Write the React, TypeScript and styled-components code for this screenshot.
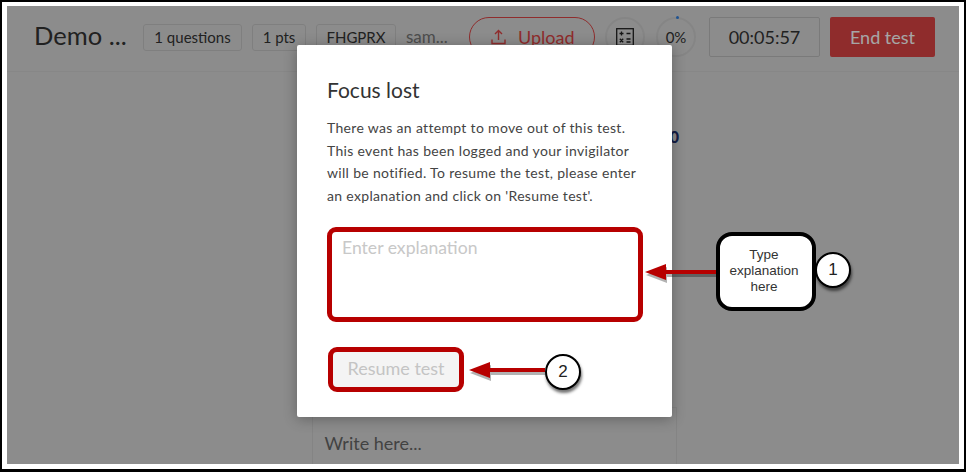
import React from "react";
import styled, { createGlobalStyle } from "styled-components";

const GlobalStyle = createGlobalStyle`
  html, body {
    margin: 0;
    padding: 0;
    background: #fff;
  }
  body {
    font-family: "Lato", "Noto Sans", sans-serif;
  }
`;

const Frame = styled.div`
  box-sizing: border-box;
  width: 966px;
  height: 472px;
  border: solid #000;
  border-width: 2px 2px 3px 2px;
  padding: 4px 5px 5px 5px;
  background: #fff;
`;

const Screen = styled.div`
  position: relative;
  height: 100%;
  overflow: hidden;
  display: flex;
  flex-direction: column;
  background: #d8d8d8;
`;

const Header = styled.header`
  flex: none;
  box-sizing: border-box;
  height: 66px;
  padding: 11px 24px 0 27px;
  display: flex;
  align-items: flex-start;
  border-bottom: 1px solid #cfcfcf;
`;

const Title = styled.h1`
  margin: -1px 18px 0 0;
  width: 91px;
  font-size: 25.5px;
  line-height: 38px;
  font-weight: 400;
  color: #333;
  white-space: nowrap;
`;

const Badge = styled.span`
  box-sizing: border-box;
  height: 27px;
  margin: 7px 10px 0 0;
  padding-bottom: 1px;
  width: ${(p: { $w: number }) => p.$w}px;
  display: flex;
  align-items: center;
  justify-content: center;
  border: 1px solid #c4c4c4;
  border-radius: 3px;
  font-size: 15px;
  color: #333;
`;

const Owner = styled.span`
  width: 63px;
  margin-top: 9px;
  font-size: 17px;
  line-height: 22px;
  color: #777;
`;

const UploadButton = styled.div`
  box-sizing: border-box;
  width: 126px;
  height: 40px;
  margin-right: 10px;
  display: flex;
  align-items: center;
  padding-left: 21px;
  gap: 12px;
  border: 1px solid #dc4444;
  border-radius: 20px;
  font-size: 18px;
  color: #dc4444;
`;

const Round = styled.div`
  position: relative;
  box-sizing: border-box;
  width: 40px;
  height: 40px;
  margin-right: ${(p: { $gap: number }) => p.$gap}px;
  border: 2px solid #cdcdcd;
  border-radius: 50%;
  display: flex;
  align-items: center;
  justify-content: center;
  font-size: 15px;
  color: #333;
`;

const Dot = styled.i`
  position: absolute;
  top: -3px;
  left: 18px;
  width: 3px;
  height: 3px;
  border-radius: 50%;
  background: #2f7fe0;
`;

const Timer = styled.div`
  box-sizing: border-box;
  width: 111px;
  height: 40px;
  margin-right: 10px;
  display: flex;
  align-items: center;
  justify-content: center;
  border: 1px solid #bcbcbc;
  border-radius: 2px;
  font-size: 18px;
  color: #333;
`;

const EndButton = styled.div`
  box-sizing: border-box;
  width: 105px;
  height: 40px;
  display: flex;
  align-items: center;
  justify-content: center;
  border-radius: 2px;
  background: #dc4444;
  font-size: 18px;
  color: #fff;
`;

const Body = styled.main`
  flex: 1;
  display: flex;
  flex-direction: column;
  align-items: center;
`;

const Question = styled.div`
  box-sizing: border-box;
  width: 366px;
  margin: 53px 0 0 26px;
  text-align: right;
  font-size: 16px;
  line-height: 24px;
  font-weight: 900;
  color: #1f2f6b;
`;

const AnswerBox = styled.div`
  box-sizing: border-box;
  width: 365px;
  height: 60px;
  margin: 258px 0 0 22px;
  padding: 22px 12px 0;
  border: 1px solid #cbcbcb;
  font-size: 18px;
  line-height: 26px;
  color: #666;
`;

const Overlay = styled.div`
  position: absolute;
  inset: 0;
  background: rgba(0, 0, 0, 0.35);
`;

const Modal = styled.section`
  position: absolute;
  left: 290px;
  top: 39px;
  box-sizing: border-box;
  width: 375px;
  height: 372px;
  padding: 32px 30px 0;
  border-radius: 2px;
  background: #fff;
  box-shadow: 0 2px 14px rgba(0, 0, 0, 0.3);
`;

const ModalTitle = styled.h2`
  margin: 0;
  font-size: 21px;
  line-height: 26px;
  font-weight: 400;
  color: #333;
`;

const Message = styled.p`
  margin: 14px 0 0;
  font-size: 14px;
  line-height: 22.6px;
  color: #444;
  letter-spacing: 0.32px;
  white-space: nowrap;
`;

const Explanation = styled.div`
  box-sizing: border-box;
  width: 316px;
  height: 95px;
  margin-top: 20px;
  padding: 3px 10px;
  border: 5px solid #b70000;
  border-radius: 9px;
  font-size: 17.6px;
  line-height: 26px;
  color: #c8c8c8;
`;

const ResumeButton = styled.div`
  box-sizing: border-box;
  width: 136px;
  height: 45px;
  margin: 25px 0 0 1px;
  padding-bottom: 4px;
  display: flex;
  align-items: center;
  justify-content: center;
  border: 5px solid #b70000;
  border-radius: 9px;
  background: #f4f4f4;
  font-size: 18px;
  color: #c4c4c4;
`;

const Arrow = styled.svg`
  position: absolute;
  left: ${(p: { $x: number; $y: number }) => p.$x}px;
  top: ${(p: { $x: number; $y: number }) => p.$y}px;
  overflow: visible;
`;

const Callout = styled.div`
  position: absolute;
  left: 709px;
  top: 226px;
  box-sizing: border-box;
  width: 100px;
  height: 79px;
  padding: 0 4px 2px 0;
  display: flex;
  align-items: center;
  justify-content: center;
  text-align: center;
  border: 4px solid #000;
  border-radius: 16px;
  background: #fff;
  font-family: "Liberation Sans", Arial, sans-serif;
  font-size: 13.5px;
  line-height: 16px;
  color: #333;
`;

const Marker = styled.div`
  position: absolute;
  left: ${(p: { $x: number; $y: number }) => p.$x}px;
  top: ${(p: { $x: number; $y: number }) => p.$y}px;
  box-sizing: border-box;
  width: 36px;
  height: 36px;
  display: flex;
  align-items: center;
  justify-content: center;
  border: 2px solid #000;
  border-radius: 50%;
  background: #fff;
  box-shadow: 1px 3px 3px rgba(0, 0, 0, 0.55);
  font-family: "Liberation Sans", Arial, sans-serif;
  font-size: 17px;
  color: #222;
`;

const UploadIcon = () => (
  <svg width="15" height="16" viewBox="0 0 15 16" fill="none" stroke="#dc4444" strokeWidth="1.4">
    <path d="M7.5 11V1.5M4 5l3.5-3.5L11 5M1 10.5v4h13v-4" />
  </svg>
);

const CalculatorIcon = () => (
  <svg width="18" height="18" viewBox="0 0 18 18" fill="none" stroke="#222" strokeWidth="1.3">
    <rect x="0.7" y="0.7" width="16.6" height="16.6" />
    <path d="M3.5 5.5h4M5.5 3.5v4M10.5 5.5h4M3.8 10.8l3.4 3.4M7.2 10.8l-3.4 3.4M10.5 11h4M10.5 14h4" />
  </svg>
);

const ArrowShape = ({ length }: { length: number }) => (
  <>
    <path
      d={`M21 6 H${length} V10 H21 V16 L0 8 L21 0 Z`}
      fill="#000"
      opacity="0.3"
      transform="translate(1 3)"
    />
    <path d={`M21 6 H${length} V10 H21 V16 L0 8 L21 0 Z`} fill="#b70000" />
  </>
);

export default function App() {
  return (
    <>
      <GlobalStyle />
      <Frame>
        <Screen>
          <Header>
            <Title>Demo ...</Title>
            <Badge $w={99}>1 questions</Badge>
            <Badge $w={54}>1 pts</Badge>
            <Badge $w={80}>FHGPRX</Badge>
            <Owner>sam...</Owner>
            <UploadButton>
              <UploadIcon />
              Upload
            </UploadButton>
            <Round $gap={11}>
              <CalculatorIcon />
            </Round>
            <Round $gap={13}>
              <Dot />
              0%
            </Round>
            <Timer>00:05:57</Timer>
            <EndButton>End test</EndButton>
          </Header>
          <Body>
            <Question>0</Question>
            <AnswerBox>Write here...</AnswerBox>
          </Body>
          <Overlay />
          <Modal>
            <ModalTitle>Focus lost</ModalTitle>
            <Message>
              There was an attempt to move out of this test.
              <br />
              This event has been logged and your invigilator
              <br />
              will be notified. To resume the test, please enter
              <br />
              an explanation and click on 'Resume test'.
            </Message>
            <Explanation>Enter explanation</Explanation>
            <ResumeButton>Resume test</ResumeButton>
          </Modal>
          <Arrow $x={638} $y={258} width="72" height="16">
            <ArrowShape length={72} />
          </Arrow>
          <Callout>
            Type
            <br />
            explanation
            <br />
            here
          </Callout>
          <Marker $x={808} $y={246}>1</Marker>
          <Arrow $x={462} $y={356} width="76" height="16">
            <ArrowShape length={76} />
          </Arrow>
          <Marker $x={538} $y={348}>2</Marker>
        </Screen>
      </Frame>
    </>
  );
}
